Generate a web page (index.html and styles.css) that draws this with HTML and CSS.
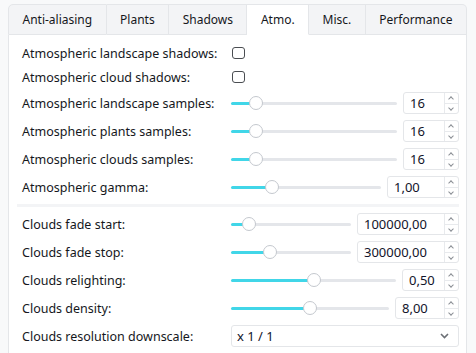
FILE: index.html
```html
<!DOCTYPE html>
<html lang="en">
<head>
    <meta charset="UTF-8">
    <title>Settings - Atmo.</title>
    <link rel="stylesheet" href="styles.css">
</head>
<body>
    <div class="settings">
        <div class="tabs">
            <div class="tab">Anti-aliasing</div>
            <div class="tab">Plants</div>
            <div class="tab">Shadows</div>
            <div class="tab active">Atmo.</div>
            <div class="tab">Misc.</div>
            <div class="tab">Performance</div>
        </div>
        <div class="pane">
            <div class="row check-row">
                <span class="label">Atmospheric landscape shadows:</span>
                <span class="check"></span>
            </div>
            <div class="row check-row">
                <span class="label">Atmospheric cloud shadows:</span>
                <span class="check"></span>
            </div>

            <div class="row">
                <span class="label">Atmospheric landscape samples:</span>
                <div class="slider" style="--v:0.118"><span class="knob"></span></div>
                <div class="spin" style="width:56px">
                    <span class="val">16</span>
                    <span class="arrows"><span class="up"></span><span class="down"></span></span>
                </div>
            </div>
            <div class="row">
                <span class="label">Atmospheric plants samples:</span>
                <div class="slider" style="--v:0.118"><span class="knob"></span></div>
                <div class="spin" style="width:56px">
                    <span class="val">16</span>
                    <span class="arrows"><span class="up"></span><span class="down"></span></span>
                </div>
            </div>
            <div class="row">
                <span class="label">Atmospheric clouds samples:</span>
                <div class="slider" style="--v:0.118"><span class="knob"></span></div>
                <div class="spin" style="width:56px">
                    <span class="val">16</span>
                    <span class="arrows"><span class="up"></span><span class="down"></span></span>
                </div>
            </div>
            <div class="row">
                <span class="label">Atmospheric gamma:</span>
                <div class="slider" style="--v:0.25"><span class="knob"></span></div>
                <div class="spin" style="width:72px">
                    <span class="val">1,00</span>
                    <span class="arrows"><span class="up"></span><span class="down"></span></span>
                </div>
            </div>

            <div class="separator"></div>

            <div class="row">
                <span class="label">Clouds fade start:</span>
                <div class="slider" style="--v:0.1"><span class="knob"></span></div>
                <div class="spin" style="width:102px">
                    <span class="val">100000,00</span>
                    <span class="arrows"><span class="up"></span><span class="down"></span></span>
                </div>
            </div>
            <div class="row">
                <span class="label">Clouds fade stop:</span>
                <div class="slider" style="--v:0.3"><span class="knob"></span></div>
                <div class="spin" style="width:102px">
                    <span class="val">300000,00</span>
                    <span class="arrows"><span class="up"></span><span class="down"></span></span>
                </div>
            </div>
            <div class="row">
                <span class="label">Clouds relighting:</span>
                <div class="slider" style="--v:0.5"><span class="knob"></span></div>
                <div class="spin" style="width:57px">
                    <span class="val">0,50</span>
                    <span class="arrows"><span class="up"></span><span class="down"></span></span>
                </div>
            </div>
            <div class="row">
                <span class="label">Clouds density:</span>
                <div class="slider" style="--v:0.5"><span class="knob"></span></div>
                <div class="spin" style="width:64px">
                    <span class="val">8,00</span>
                    <span class="arrows"><span class="up"></span><span class="down"></span></span>
                </div>
            </div>
            <div class="row">
                <span class="label">Clouds resolution downscale:</span>
                <div class="combo">
                    <span class="val">x 1 / 1</span>
                    <svg class="chevron" width="9" height="6" viewBox="0 0 9 6"><polyline points="1,1 4.5,4.5 8,1" fill="none" stroke="#6b6f75" stroke-width="1.6"/></svg>
                </div>
            </div>
        </div>
    </div>
</body>
</html>
```

FILE: styles.css
```css
html, body {
    margin: 0;
    padding: 0;
    height: 100%;
    overflow: hidden;
}
body {
    background: #f8f9fa;
    font-family: 'Noto Sans', 'Open Sans', Arial, sans-serif;
    color: #15171c;
}
.settings {
    height: 100%;
    box-sizing: border-box;
    padding: 4px 9px 0 8px;
    display: flex;
    flex-direction: column;
}

/* tab bar */
.tabs {
    display: flex;
    flex: 0 0 31px;
}
.tab {
    flex: 1 1 auto;
    display: flex;
    align-items: center;
    justify-content: center;
    padding: 0 12px;
    font-size: 12px;
    background: #f3f4f6;
    border-top: 1px solid #e4e6e9;
    border-right: 1px solid #e4e6e9;
    border-bottom: 1px solid #e4e6e9;
    box-sizing: border-box;
}
.tab:first-child {
    border-left: 1px solid #e4e6e9;
    border-top-left-radius: 5px;
}
.tab:last-child {
    border-top-right-radius: 5px;
}
.tab.active {
    background: #fff;
    border-bottom-color: #fff;
}

/* page */
.pane {
    flex: 1;
    min-height: 0;
    background: #fff;
    border-left: 1px solid #e4e6e9;
    border-right: 1px solid #e4e6e9;
    padding: 9px 7px 0 8px;
    display: flex;
    flex-direction: column;
    gap: 6px;
}
.row {
    display: flex;
    align-items: center;
    flex: 0 0 22px;
    padding-left: 5px;
}
.check-row {
    flex-basis: 18px;
}
.label {
    flex: 0 0 209px;
    font-size: 12.5px;
    white-space: nowrap;
}
.check {
    width: 13px;
    height: 12px;
    margin-left: 1px;
    border: 1.5px solid #4a4d52;
    border-radius: 3px;
    box-sizing: border-box;
}
.separator {
    flex: 0 0 3px;
    background: #f3f4f6;
}

/* sliders */
.slider {
    --fill: calc((100% - 14px) * var(--v) + 7px);
    flex: 1;
    position: relative;
    height: 3px;
    margin-right: 6px;
    border-radius: 2px;
    background: linear-gradient(to right, #41d6e8 var(--fill), #e4e6ea var(--fill));
}
.knob {
    position: absolute;
    top: -6px;
    left: calc((100% - 14px) * var(--v));
    width: 14px;
    height: 14px;
    border-radius: 50%;
    background: #fff;
    border: 1px solid #c4c8ce;
    box-sizing: border-box;
}

/* spin boxes */
.spin, .combo {
    display: flex;
    align-items: stretch;
    height: 22px;
    box-sizing: border-box;
    background: #fff;
    border: 1px solid #e4e6e9;
    border-radius: 3px;
    font-size: 13px;
    color: #12142a;
}
.spin .val {
    flex: 1;
    padding-left: 6px;
    line-height: 20px;
}
.arrows {
    width: 13px;
    display: flex;
    flex-direction: column;
    border-left: 1px solid #e8eaed;
}
.arrows span {
    flex: 1;
    position: relative;
}
.arrows .up {
    border-bottom: 1px solid #e8eaed;
}
.arrows span::after {
    content: '';
    position: absolute;
    left: 4px;
    width: 3px;
    height: 3px;
    border-left: 1px solid #8a8e94;
    border-top: 1px solid #8a8e94;
}
.arrows .up::after {
    top: 4px;
    transform: rotate(45deg);
}
.arrows .down::after {
    top: 2px;
    transform: rotate(225deg);
}
.combo {
    flex: 1;
    justify-content: space-between;
    align-items: center;
    padding: 0 9px 0 5px;
}
.combo .chevron {
    display: block;
}
```
